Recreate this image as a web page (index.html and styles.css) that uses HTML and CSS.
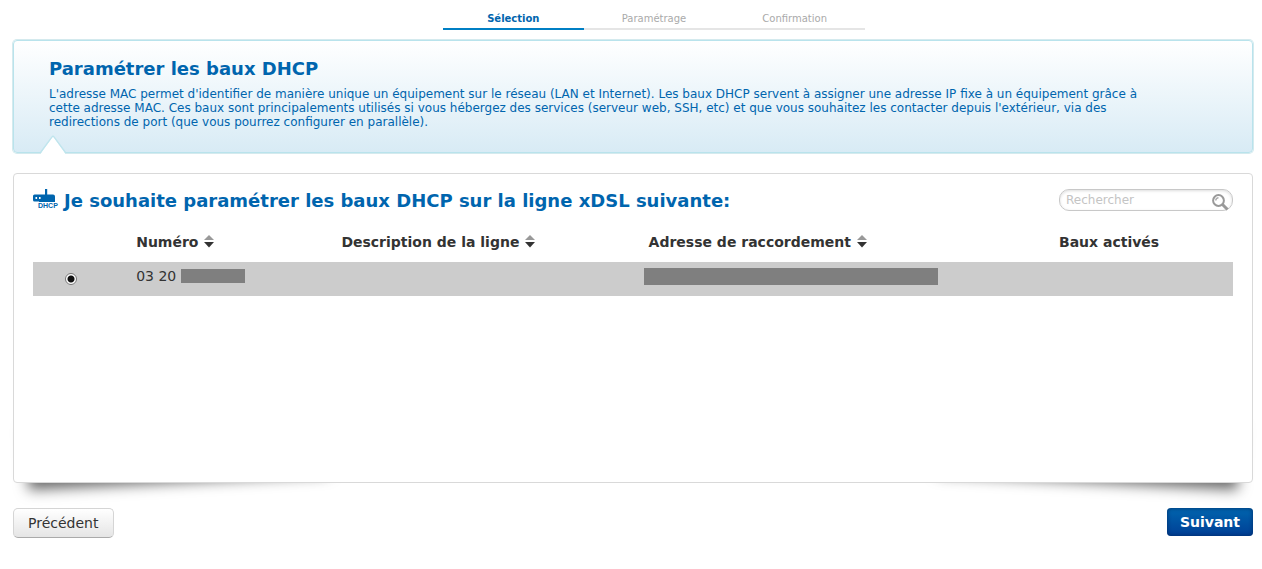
FILE: index.html
```html
<!DOCTYPE html>
<html lang="fr">
<head>
<meta charset="utf-8">
<title>Paramétrer les baux DHCP</title>
<link rel="stylesheet" href="styles.css">
</head>
<body>
<main class="page">
  <ol class="steps">
    <li class="step step-active" aria-current="step">Sélection</li>
    <li class="step">Paramétrage</li>
    <li class="step">Confirmation</li>
  </ol>

  <section class="callout">
    <h1 class="title">Paramétrer les baux DHCP</h1>
    <p class="callout-text">L'adresse MAC permet d'identifier de manière unique un équipement sur le réseau (LAN et Internet). Les baux DHCP servent à assigner une adresse IP fixe à un équipement grâce à cette adresse MAC. Ces baux sont principalements utilisés si vous hébergez des services (serveur web, SSH, etc) et que vous souhaitez les contacter depuis l'extérieur, via des redirections de port (que vous pourrez configurer en parallèle).</p>
    <svg class="notch" width="28" height="19" viewBox="0 0 28 19" aria-hidden="true">
      <path d="M2 18 L14 1.500 L26 18 V19 H2Z" fill="#fff"/>
      <path d="M1.500 17.500 L13 2 Q14 .5 15 2 L26.500 17.500" fill="none" stroke="#bfe5ed" stroke-width="1.300"/>
    </svg>
  </section>

  <section class="panel">
    <div class="panel-body">
      <div class="panel-head">
        <svg class="router" width="26" height="20" viewBox="0 0 26 20" aria-hidden="true">
          <path fill="#0065ae" fill-rule="evenodd" d="M12 0h2.200v5.500H20q2 0 2 2V13H6v-.5H1.500Q0 12.500 0 11V7q0-1.500 1.500-1.500H12ZM2.500 8v2h1.600V8ZM6 8v2h1.600V8Z"/>
          <text class="router-text" x="5" y="19" font-size="7">DHCP</text>
        </svg>
        <h2 class="title">Je souhaite paramétrer les baux DHCP sur la ligne xDSL suivante:</h2>
        <form class="search">
          <input class="search-input" type="text" placeholder="Rechercher" aria-label="Rechercher">
          <button class="search-button" type="button" aria-label="Lancer la recherche">
            <svg width="17" height="17" viewBox="0 0 17 17" aria-hidden="true">
              <circle cx="6.500" cy="6.500" r="5.400" fill="#fff" stroke="#999" stroke-width="2"/>
              <path d="M3.800 6.500a2.700 2.700 0 0 1 2.700-2.700" fill="none" stroke="#aaa" stroke-width="1.500"/>
              <path d="M10.500 10.500l5 5" stroke="#999" stroke-width="3"/>
            </svg>
          </button>
        </form>
      </div>

      <table class="lines">
        <colgroup><col class="col-pick"><col class="col-number"><col class="col-desc"><col class="col-address"><col class="col-leases"></colgroup>
        <thead>
          <tr>
            <td></td>
            <th scope="col"><button class="sort" type="button">Numéro <svg width="12" height="13" viewBox="0 0 12 13" aria-hidden="true"><path d="M6 0l5 5H1z" fill="#999"/><path d="M1 7h10l-5 5.500z" fill="#333"/></svg></button></th>
            <th scope="col"><button class="sort" type="button">Description de la ligne <svg width="12" height="13" viewBox="0 0 12 13" aria-hidden="true"><path d="M6 0l5 5H1z" fill="#999"/><path d="M1 7h10l-5 5.500z" fill="#333"/></svg></button></th>
            <th scope="col"><button class="sort" type="button">Adresse de raccordement <svg width="12" height="13" viewBox="0 0 12 13" aria-hidden="true"><path d="M6 0l5 5H1z" fill="#999"/><path d="M1 7h10l-5 5.500z" fill="#333"/></svg></button></th>
            <th scope="col">Baux activés</th>
          </tr>
        </thead>
        <tbody>
          <tr class="selected">
            <td class="pick"><input class="radio" type="radio" name="line" id="line-1" checked></td>
            <td><label class="number" for="line-1">03 20 <span class="mask mask-number"></span></label></td>
            <td></td>
            <td class="address"><span class="mask mask-address"></span></td>
            <td></td>
          </tr>
        </tbody>
      </table>
    </div>
  </section>

  <div class="actions">
    <button class="button button-back" type="button">Précédent</button>
    <button class="button button-next" type="button">Suivant</button>
  </div>
</main>
</body>
</html>
```

FILE: styles.css
```css
* { box-sizing: border-box; }
body {
  margin: 0;
  background: #fff;
  color: #333;
  font-family: "DejaVu Sans", sans-serif;
  font-size: 14px;
}
button, input { font: inherit; color: inherit; }
.page { padding: 10px 9px 24px 13px; }

.steps {
  display: flex;
  width: 422px;
  max-width: 100%;
  margin: 0 auto;
  padding: 0;
  list-style: none;
  translate: 21px;
}
.step {
  flex: 1;
  border-bottom: 2px solid #e5e5e5;
  color: #aaa;
  font-size: 10px;
  line-height: 18px;
  text-align: center;
}
.step-active {
  border-color: #007fc4;
  color: #0065ae;
  font-weight: bold;
}

.callout {
  position: relative;
  margin-top: 10px;
  padding: 16px 90px 23px 35px;
  border: 1px solid #b9e3ec;
  border-radius: 4px;
  box-shadow: 0 0 0 1px #d4eaee;
  background: linear-gradient(#fff, #d8ebf5);
  color: #0065ae;
}
.title {
  margin: 0;
  color: #0065ae;
  font-size: 18px;
  line-height: 24px;
}
.callout-text {
  margin: 6px 0 0;
  font-size: 12px;
  line-height: 14px;
}
.notch { position: absolute; left: 25px; bottom: -2px; }

.panel {
  position: relative;
  z-index: 0;
  margin-top: 20px;
}
.panel::before,
.panel::after {
  content: "";
  position: absolute;
  z-index: -1;
  bottom: 16px;
  left: 13px;
  width: 50%;
  max-width: 300px;
  height: 20%;
  box-shadow: 0 15px 14px #666;
  transform: rotate(-3deg);
}
.panel::after {
  left: auto;
  right: 13px;
  transform: rotate(3deg);
}
.panel-body {
  min-height: 310px;
  padding: 15px 19px;
  border: 1px solid #d9d9d9;
  border-radius: 4px;
  background: #fff;
}
.panel-head { display: flex; align-items: flex-start; gap: 5px; }
.router { flex: none; }
.router-text {
  fill: #0065ae;
  font-family: "Liberation Sans", sans-serif;
  font-weight: bold;
}

.search {
  position: relative;
  width: 174px;
  margin-left: auto;
}
.search-input {
  display: block;
  width: 100%;
  height: 22px;
  padding: 0 24px 0 6px;
  border: 1px solid #c8c8c8;
  border-radius: 10px;
  box-shadow: inset 0 1px 3px #ddd;
  background: #fff;
  font-size: 12px;
}
.search-input::placeholder { color: #c4c4c4; opacity: 1; }
.search-button {
  position: absolute;
  top: 5px;
  right: 4px;
  display: flex;
  padding: 0;
  border: 0;
  background: none;
}

.lines {
  width: 100%;
  margin-top: 8px;
  border-collapse: collapse;
  table-layout: fixed;
}
.col-pick { width: 8.6%; }
.col-number { width: 17.1%; }
.col-desc { width: 25.6%; }
.col-address { width: 34.2%; }
.col-leases { width: 14.5%; }
.lines th, .lines td { padding: 0; text-align: left; }
.lines th { height: 41px; }
.sort {
  display: flex;
  align-items: center;
  gap: 5px;
  padding: 0;
  border: 0;
  background: none;
  font-weight: bold;
  white-space: nowrap;
}
.selected { height: 34px; background: #ccc; }
.lines .pick { padding-left: 32px; }
.radio {
  appearance: none;
  display: block;
  width: 12px;
  height: 12px;
  margin: 0;
  border: 1px solid #777;
  border-radius: 50%;
  background: radial-gradient(circle, #111 0 3px, #fff 4px);
}
.number {
  display: flex;
  align-items: center;
  gap: 5px;
  padding-bottom: 6px;
}
.mask { display: block; background: #7f7f7f; }
.mask-number { width: 64px; height: 14px; }
.mask-address { width: 294px; height: 17px; margin: 0 0 5px -5px; }

.actions {
  display: flex;
  justify-content: space-between;
  align-items: flex-start;
  margin-top: 25px;
}
.button { border-radius: 4px; line-height: 16px; }
.button-back {
  padding: 6px 15px 6px 14px;
  border: 1px solid #d5d5d5;
  border-bottom-color: #aaa;
  border-radius: 5px;
  background: linear-gradient(#fff, #e5e5e5);
}
.button-next {
  padding: 6px 13px;
  border: 0;
  box-shadow: inset 0 0 4px #002c66;
  background: linear-gradient(#0065ae, #003f95);
  color: #fff;
  font-weight: bold;
}
```
